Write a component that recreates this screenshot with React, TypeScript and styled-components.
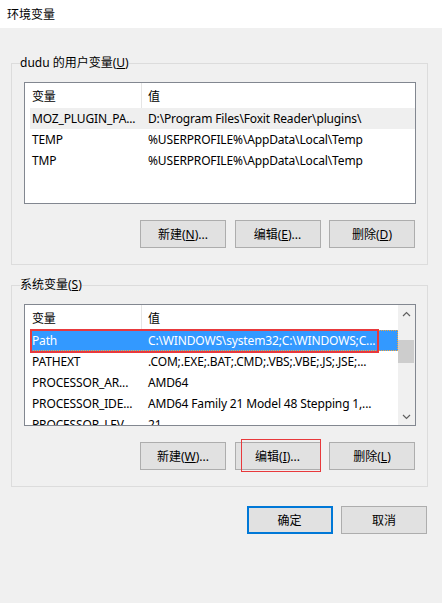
import React from 'react';
import styled, { createGlobalStyle } from 'styled-components';

const FONT = `"Segoe UI", "Noto Sans", "Noto Sans CJK SC", sans-serif`;

const Global = createGlobalStyle`
  html, body { margin: 0; padding: 0; background: #f0f0f0; }
  body { font-family: ${FONT}; font-size: 12px; color: #000; }
  * { box-sizing: border-box; }
`;

const Window = styled.div`
  width: 442px;
  height: 603px;
  background: #f0f0f0;
  display: flex;
  flex-direction: column;
  overflow: hidden;
`;

const TitleBar = styled.div`
  height: 28px;
  flex-shrink: 0;
  background: #fff;
  display: flex;
  align-items: center;
  padding-left: 7px;
  font-size: 12px;
`;

const Body = styled.div`
  padding: 27px 14px 0 11px;
  display: flex;
  flex-direction: column;
`;

const Group = styled.fieldset<{ $gapTop?: number }>`
  margin: ${(p) => p.$gapTop ?? 0}px 0 0 0;
  padding: 11px 11px 16px 12px;
  border: 1px solid #dcdcdc;
  min-width: 0;
  display: flex;
  flex-direction: column;
  gap: 16px;
`;

const Legend = styled.legend`
  margin-left: -4px;
  padding: 0;
  font-size: 12px;
  line-height: 16px;
`;

const Key = styled.span`
  text-decoration: underline;
`;

const ListBox = styled.div`
  height: 122px;
  border: 1px solid #828790;
  background: #fff;
  display: flex;
  overflow: hidden;
  letter-spacing: -0.15px;
`;

const ListContent = styled.div`
  flex: 1;
  min-width: 0;
  display: flex;
  flex-direction: column;
`;

const Header = styled.div`
  height: 25px;
  flex-shrink: 0;
  display: flex;
`;

const HeaderCell = styled.div<{ $first?: boolean }>`
  display: flex;
  align-items: center;
  ${(p) =>
    p.$first
      ? `width: 117px; padding-left: 7px; border-right: 1px solid #e5e5e5;`
      : `flex: 1; padding-left: 6px;`}
`;

type RowState = 'none' | 'inactive' | 'selected';

const Row = styled.div<{ $state: RowState }>`
  position: relative;
  height: 21px;
  flex-shrink: 0;
  margin-left: 5px;
  display: flex;
  align-items: center;
  white-space: nowrap;
  background: ${(p) =>
    p.$state === 'selected' ? '#3399ff' : p.$state === 'inactive' ? '#efefef' : 'transparent'};
  color: ${(p) => (p.$state === 'selected' ? '#fff' : '#000')};
  outline: ${(p) => (p.$state === 'selected' ? '1px dotted #f6a53a' : 'none')};
  outline-offset: -1px;
`;

const NameCell = styled.div`
  width: 111px;
  flex-shrink: 0;
  padding-left: 2px;
  overflow: hidden;
`;

const ValueCell = styled.div`
  flex: 1;
  min-width: 0;
  padding-left: 7px;
  overflow: hidden;
`;

const RedMark = styled.div<{ $w: number }>`
  position: absolute;
  pointer-events: none;
  border: ${(p) => p.$w}px solid #e8393c;
`;

const RowMark = styled(RedMark)`
  left: 0;
  right: 19px;
  top: -1px;
  bottom: -2px;
`;

const ButtonMark = styled(RedMark)`
  left: 5px;
  right: -1px;
  top: -4px;
  bottom: -3px;
`;

const ScrollBar = styled.div`
  width: 17px;
  flex-shrink: 0;
  background: #f0f0f0;
  display: flex;
  flex-direction: column;
`;

const Arrow = styled.div`
  height: 17px;
  display: flex;
  align-items: center;
  justify-content: center;
  color: #606060;
`;

const Track = styled.div`
  flex: 1;
`;

const Thumb = styled.div`
  height: 23px;
  margin: 18px 1px 0 0;
  background: #cdcdcd;
`;

const ButtonRow = styled.div<{ $top?: number }>`
  display: flex;
  justify-content: flex-end;
  gap: 8.5px;
  margin: ${(p) => p.$top ?? 0}px 1px 0 0;
`;

const Btn = styled.button<{ $primary?: boolean }>`
  position: relative;
  width: 86px;
  height: 28px;
  padding: 0;
  background: #e1e1e1;
  border: ${(p) => (p.$primary ? '2px solid #0078d7' : '1px solid #adadad')};
  font-family: ${FONT};
  font-size: 12px;
  color: #000;
`;

const Chevron = ({ up }: { up?: boolean }) => (
  <svg width="9" height="6" viewBox="0 0 9 6">
    <path
      d={up ? 'M1 5 L4.5 1.5 L8 5' : 'M1 1 L4.5 4.5 L8 1'}
      fill="none"
      stroke="currentColor"
      strokeWidth="1.2"
    />
  </svg>
);

type Item = { name: string; value: string; state?: RowState; mark?: boolean };

const userVars: Item[] = [
  { name: 'MOZ_PLUGIN_PA...', value: 'D:\\Program Files\\Foxit Reader\\plugins\\', state: 'inactive' },
  { name: 'TEMP', value: '%USERPROFILE%\\AppData\\Local\\Temp' },
  { name: 'TMP', value: '%USERPROFILE%\\AppData\\Local\\Temp' },
];

const sysVars: Item[] = [
  { name: 'Path', value: 'C:\\WINDOWS\\system32;C:\\WINDOWS;C...', state: 'selected', mark: true },
  { name: 'PATHEXT', value: '.COM;.EXE;.BAT;.CMD;.VBS;.VBE;.JS;.JSE;...' },
  { name: 'PROCESSOR_AR...', value: 'AMD64' },
  { name: 'PROCESSOR_IDE...', value: 'AMD64 Family 21 Model 48 Stepping 1,...' },
  { name: 'PROCESSOR_LEV...', value: '21' },
];

const VarList = ({ items, scroll }: { items: Item[]; scroll?: boolean }) => (
  <ListBox>
    <ListContent>
      <Header>
        <HeaderCell $first>变量</HeaderCell>
        <HeaderCell>值</HeaderCell>
      </Header>
      {items.map((it) => (
        <Row key={it.name} $state={it.state ?? 'none'}>
          <NameCell>{it.name}</NameCell>
          <ValueCell>{it.value}</ValueCell>
          {it.mark && <RowMark $w={2} />}
        </Row>
      ))}
    </ListContent>
    {scroll && (
      <ScrollBar>
        <Arrow>
          <Chevron up />
        </Arrow>
        <Track>
          <Thumb />
        </Track>
        <Arrow>
          <Chevron />
        </Arrow>
      </ScrollBar>
    )}
  </ListBox>
);

export default function App() {
  return (
    <Window>
      <Global />
      <TitleBar>环境变量</TitleBar>
      <Body>
        <Group>
          <Legend>
            dudu 的用户变量(<Key>U</Key>)
          </Legend>
          <VarList items={userVars} />
          <ButtonRow>
            <Btn>
              新建(<Key>N</Key>)...
            </Btn>
            <Btn>
              编辑(<Key>E</Key>)...
            </Btn>
            <Btn>
              删除(<Key>D</Key>)
            </Btn>
          </ButtonRow>
        </Group>
        <Group $gapTop={12}>
          <Legend>
            系统变量(<Key>S</Key>)
          </Legend>
          <VarList items={sysVars} scroll />
          <ButtonRow>
            <Btn>
              新建(<Key>W</Key>)...
            </Btn>
            <Btn>
              编辑(<Key>I</Key>)...
              <ButtonMark $w={1} />
            </Btn>
            <Btn>
              删除(<Key>L</Key>)
            </Btn>
          </ButtonRow>
        </Group>
        <ButtonRow $top={19}>
          <Btn $primary>确定</Btn>
          <Btn>取消</Btn>
        </ButtonRow>
      </Body>
    </Window>
  );
}
